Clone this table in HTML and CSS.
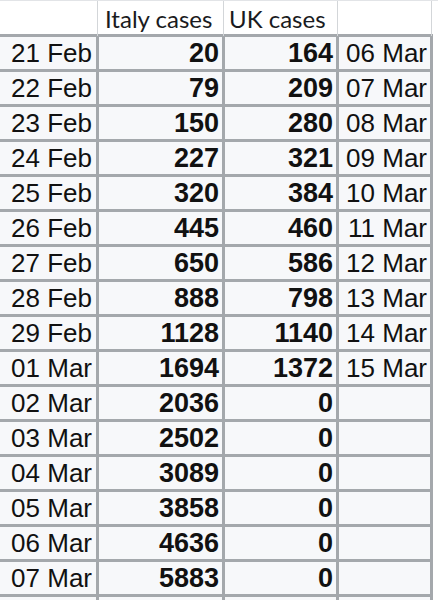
FILE: index.html
```html
<!DOCTYPE html>
<html>
<head>
<meta charset="utf-8">
<link rel="stylesheet" href="styles.css">
</head>
<body>
<div class="sheet">
  <div class="head">
    <div class="hcell"></div>
    <div class="hcell">Italy cases</div>
    <div class="hcell">UK cases</div>
    <div class="hcell"></div>
  </div>
  <div class="grid">
    <div class="c d">21 Feb</div><div class="c n">20</div><div class="c n">164</div><div class="c e">06 Mar</div>
    <div class="c d">22 Feb</div><div class="c n">79</div><div class="c n">209</div><div class="c e">07 Mar</div>
    <div class="c d">23 Feb</div><div class="c n">150</div><div class="c n">280</div><div class="c e">08 Mar</div>
    <div class="c d">24 Feb</div><div class="c n">227</div><div class="c n">321</div><div class="c e">09 Mar</div>
    <div class="c d">25 Feb</div><div class="c n">320</div><div class="c n">384</div><div class="c e">10 Mar</div>
    <div class="c d">26 Feb</div><div class="c n">445</div><div class="c n">460</div><div class="c e">11 Mar</div>
    <div class="c d">27 Feb</div><div class="c n">650</div><div class="c n">586</div><div class="c e">12 Mar</div>
    <div class="c d">28 Feb</div><div class="c n">888</div><div class="c n">798</div><div class="c e">13 Mar</div>
    <div class="c d">29 Feb</div><div class="c n">1128</div><div class="c n">1140</div><div class="c e">14 Mar</div>
    <div class="c d">01 Mar</div><div class="c n">1694</div><div class="c n">1372</div><div class="c e">15 Mar</div>
    <div class="c d">02 Mar</div><div class="c n">2036</div><div class="c n">0</div><div class="c e"></div>
    <div class="c d">03 Mar</div><div class="c n">2502</div><div class="c n">0</div><div class="c e"></div>
    <div class="c d">04 Mar</div><div class="c n">3089</div><div class="c n">0</div><div class="c e"></div>
    <div class="c d">05 Mar</div><div class="c n">3858</div><div class="c n">0</div><div class="c e"></div>
    <div class="c d">06 Mar</div><div class="c n">4636</div><div class="c n">0</div><div class="c e"></div>
    <div class="c d">07 Mar</div><div class="c n">5883</div><div class="c n">0</div><div class="c e"></div>
    <div class="c d"></div><div class="c n"></div><div class="c n"></div><div class="c e"></div>
  </div>
</div>
</body>
</html>
```

FILE: styles.css
```css
html, body {
  margin: 0;
  padding: 0;
  background: #ffffff;
  overflow: hidden;
}
.sheet {
  width: 438px;
  height: 600px;
  overflow: hidden;
}
.head {
  display: grid;
  grid-template-columns: 98px 126px 114px 94px;
  height: 34px;
  border-top: 1px solid #e2e4e7;
  box-sizing: border-box;
}
.hcell {
  border-right: 1px solid #d3d6d9;
  font-family: "Lato", "Open Sans", sans-serif;
  font-size: 24px;
  line-height: 35px;
  color: #1a1a20;
  padding-left: 7px;
  white-space: nowrap;
}
.hcell:nth-child(3) {
  padding-left: 5px;
}
.grid {
  display: grid;
  grid-template-columns: 96px 123px 111px 91px;
  grid-auto-rows: 32px;
  gap: 3px;
  padding: 3px 3px 3px 0;
  background: #a4a8ac;
  width: max-content;
}
.c {
  background: #f7f8fa;
  font-family: "Liberation Sans", Arial, sans-serif;
  font-size: 26px;
  line-height: 33px;
  color: #111111;
  white-space: nowrap;
  overflow: hidden;
}
.d {
  text-align: right;
  padding-right: 4px;
}
.n {
  text-align: right;
  font-weight: bold;
  font-size: 27px;
  padding-right: 3px;
}
.e {
  text-align: right;
  padding-right: 3px;
}
```
